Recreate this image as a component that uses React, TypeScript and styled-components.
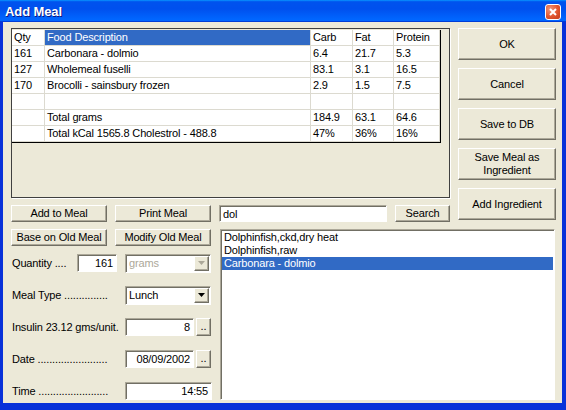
import styled, { createGlobalStyle, css } from "styled-components";

const GlobalStyle = createGlobalStyle`
  html, body {
    margin: 0;
    padding: 0;
    background: #ffffff;
  }
`;

const raised = css`
  background: #ece9d8;
  border: 1px solid;
  border-color: #ffffff #716f64 #716f64 #ffffff;
  box-shadow: inset -1px -1px #aca899;
`;

const sunken = css`
  background: #ffffff;
  border: 1px solid;
  border-color: #aca899 #ffffff #ffffff #aca899;
  box-shadow: inset 1px 1px #716f64;
`;

const Window = styled.div`
  width: 566px;
  height: 410px;
  display: flex;
  flex-direction: column;
  background: #0831d9;
  font-family: "Liberation Sans", Arial, sans-serif;
  font-size: 11px;
  letter-spacing: -0.15px;
  color: #000;
  box-sizing: border-box;
  overflow: hidden;
`;

const TitleBar = styled.div`
  height: 22px;
  flex: none;
  display: flex;
  align-items: center;
  justify-content: space-between;
  padding: 0 5px 0 5px;
  background: linear-gradient(
    180deg,
    #0997ff 0%,
    #0053ee 8%,
    #0050ee 40%,
    #0066ff 88%,
    #0066ff 93%,
    #005bff 95%,
    #003dd7 96%,
    #003dd7 100%
  );
`;

const Title = styled.span`
  color: #fff;
  font-weight: bold;
  font-size: 13px;
  letter-spacing: -0.1px;
  text-shadow: 1px 1px #0a1883;
`;

const CloseBox = styled.div`
  width: 14px;
  height: 14px;
  border: 1px solid #fff;
  border-radius: 3px;
  background: radial-gradient(circle at 30% 30%, #f0967a, #e0542d 55%, #c43a17);
  display: flex;
  align-items: center;
  justify-content: center;
  margin-top: 1px;
`;

const Client = styled.div`
  flex: 1;
  margin: 0 4px 7px 3px;
  background: #ece9d8;
  display: grid;
  grid-template-columns: 200px 231px 98px;
  grid-template-rows: 170px 17px 1fr;
  column-gap: 8px;
  row-gap: 7px;
  padding: 6px 0 5px 8px;
  min-height: 0;
`;

const GridPanel = styled.div`
  grid-column: 1 / 3;
  grid-row: 1;
  border: 1px solid #404040;
  box-shadow: 1px 1px #ffffff;
  background: #ece9d8;
  padding: 1px 0 0 0;
`;

const Table = styled.div`
  width: 428px;
  display: grid;
  grid-template-columns: 33px 266px 42px 41px 46px;
  grid-auto-rows: 16px;
  background: #fff;
  border-right: 1px solid #000;
  border-bottom: 1px solid #000;
`;

const Cell = styled.div<{ $selected?: boolean }>`
  border-right: 1px solid #dcdad0;
  border-bottom: 1px solid #dcdad0;
  padding-left: 2px;
  line-height: 15px;
  white-space: nowrap;
  overflow: hidden;
  background: ${(p) => (p.$selected ? "#316ac5" : "#fff")};
  color: ${(p) => (p.$selected ? "#fff" : "#000")};
`;

const SideButtons = styled.div`
  grid-column: 3;
  grid-row: 1 / 3;
  display: flex;
  flex-direction: column;
  gap: 8px;
`;

const PushButton = styled.button<{ $tall?: boolean }>`
  ${raised};
  height: ${(p) => (p.$tall ? "32px" : "17px")};
  padding: 0;
  font-family: inherit;
  font-size: 11px;
  letter-spacing: inherit;
  color: #000;
  line-height: 13px;
  text-align: center;
  flex: none;
`;

const ActionRow = styled.div`
  display: flex;
  gap: 8px;
  align-items: flex-start;

  ${PushButton} {
    width: 96px;
    height: 17px;
  }
`;

const SearchRow = styled.div`
  grid-column: 2;
  grid-row: 2;
  display: flex;
  gap: 8px;
`;

const TextInput = styled.div<{ $w: number; $right?: boolean }>`
  ${sunken};
  width: ${(p) => p.$w}px;
  height: 18px;
  box-sizing: border-box;
  padding: 0 3px;
  line-height: 16px;
  text-align: ${(p) => (p.$right ? "right" : "left")};
  flex: none;
`;

const SearchInput = styled(TextInput)`
  height: 17px;
  line-height: 16px;
`;

const LeftColumn = styled.div`
  grid-column: 1;
  grid-row: 3;
  display: flex;
  flex-direction: column;
`;

const Fields = styled.div`
  display: flex;
  flex-direction: column;
  gap: 14px;
  margin-top: 8px;
`;

const FieldRow = styled.div`
  display: flex;
  align-items: center;
  height: 18px;
`;

const FieldLabel = styled.span<{ $w: number }>`
  width: ${(p) => p.$w}px;
  padding-left: 1px;
  white-space: nowrap;
  overflow: hidden;
  flex: none;
`;

const Combo = styled.div<{ $disabled?: boolean }>`
  ${sunken};
  width: 87px;
  height: 19px;
  box-sizing: border-box;
  display: flex;
  align-items: center;
  justify-content: space-between;
  padding: 0 1px 0 3px;
  color: ${(p) => (p.$disabled ? "#aca899" : "#000")};
`;

const ComboArrow = styled.div<{ $disabled?: boolean }>`
  ${raised};
  width: 15px;
  height: 15px;
  box-sizing: border-box;
  display: flex;
  align-items: center;
  justify-content: center;
  color: ${(p) => (p.$disabled ? "#aca899" : "#000")};
`;

const Dots = styled.button`
  ${raised};
  width: 16px;
  height: 18px;
  margin-left: 2px;
  padding: 0 0 3px 0;
  font-family: inherit;
  font-size: 11px;
  line-height: 11px;
  display: flex;
  align-items: flex-end;
  justify-content: center;
`;

const ListBox = styled.div`
  ${sunken};
  grid-column: 2 / 4;
  grid-row: 3;
  margin-right: 1px;
  margin-left: 1px;
  padding: 1px 1px;
  box-sizing: border-box;
`;

const ListItem = styled.div<{ $selected?: boolean }>`
  height: 13px;
  line-height: 13px;
  padding-left: 2px;
  background: ${(p) => (p.$selected ? "#316ac5" : "transparent")};
  color: ${(p) => (p.$selected ? "#fff" : "#000")};
  white-space: nowrap;
`;

const rows: [string, string, string, string, string][] = [
  ["161", "Carbonara - dolmio", "6.4", "21.7", "5.3"],
  ["127", "Wholemeal fuselli", "83.1", "3.1", "16.5"],
  ["170", "Brocolli - sainsbury frozen", "2.9", "1.5", "7.5"],
  ["", "", "", "", ""],
  ["", "Total grams", "184.9", "63.1", "64.6"],
  ["", "Total kCal 1565.8 Cholestrol - 488.8", "47%", "36%", "16%"],
];

const Arrow = () => (
  <svg width="7" height="4" viewBox="0 0 7 4">
    <path d="M0 0h7L3.5 4z" fill="currentColor" />
  </svg>
);

export default function App() {
  return (
    <>
      <GlobalStyle />
      <Window>
        <TitleBar>
          <Title>Add Meal</Title>
          <CloseBox>
            <svg width="8" height="8" viewBox="0 0 8 8">
              <path d="M1 1L7 7M7 1L1 7" stroke="#fff" strokeWidth="2" />
            </svg>
          </CloseBox>
        </TitleBar>
        <Client>
          <GridPanel>
            <Table>
              <Cell>Qty</Cell>
              <Cell $selected>Food Description</Cell>
              <Cell>Carb</Cell>
              <Cell>Fat</Cell>
              <Cell>Protein</Cell>
              {rows.map((r, i) =>
                r.map((v, j) => <Cell key={`${i}-${j}`}>{v}</Cell>)
              )}
            </Table>
          </GridPanel>

          <SideButtons>
            <PushButton $tall>OK</PushButton>
            <PushButton $tall>Cancel</PushButton>
            <PushButton $tall>Save to DB</PushButton>
            <PushButton $tall>
              Save Meal as
              <br />
              Ingredient
            </PushButton>
            <PushButton $tall>Add Ingredient</PushButton>
          </SideButtons>

          <ActionRow>
            <PushButton>Add to Meal</PushButton>
            <PushButton>Print Meal</PushButton>
          </ActionRow>

          <SearchRow>
            <SearchInput $w={168}>dol</SearchInput>
            <PushButton style={{ width: 55 }}>Search</PushButton>
          </SearchRow>

          <LeftColumn>
            <ActionRow>
              <PushButton>Base on Old Meal</PushButton>
              <PushButton>Modify Old Meal</PushButton>
            </ActionRow>
            <Fields>
              <FieldRow>
                <FieldLabel $w={65}>Quantity ....</FieldLabel>
                <TextInput $w={40} $right>
                  161
                </TextInput>
                <Combo $disabled style={{ marginLeft: 8 }}>
                  grams
                  <ComboArrow $disabled>
                    <Arrow />
                  </ComboArrow>
                </Combo>
              </FieldRow>
              <FieldRow>
                <FieldLabel $w={113}>Meal Type ...............</FieldLabel>
                <Combo>
                  Lunch
                  <ComboArrow>
                    <Arrow />
                  </ComboArrow>
                </Combo>
              </FieldRow>
              <FieldRow>
                <FieldLabel $w={113}>Insulin 23.12 gms/unit.</FieldLabel>
                <TextInput $w={69} $right>
                  8
                </TextInput>
                <Dots>..</Dots>
              </FieldRow>
              <FieldRow>
                <FieldLabel $w={113}>Date ........................</FieldLabel>
                <TextInput $w={69} $right>
                  08/09/2002
                </TextInput>
                <Dots>..</Dots>
              </FieldRow>
              <FieldRow>
                <FieldLabel $w={113}>Time ........................</FieldLabel>
                <TextInput $w={87} $right>
                  14:55
                </TextInput>
              </FieldRow>
            </Fields>
          </LeftColumn>

          <ListBox>
            <ListItem>Dolphinfish,ckd,dry heat</ListItem>
            <ListItem>Dolphinfish,raw</ListItem>
            <ListItem $selected>Carbonara - dolmio</ListItem>
          </ListBox>
        </Client>
      </Window>
    </>
  );
}
